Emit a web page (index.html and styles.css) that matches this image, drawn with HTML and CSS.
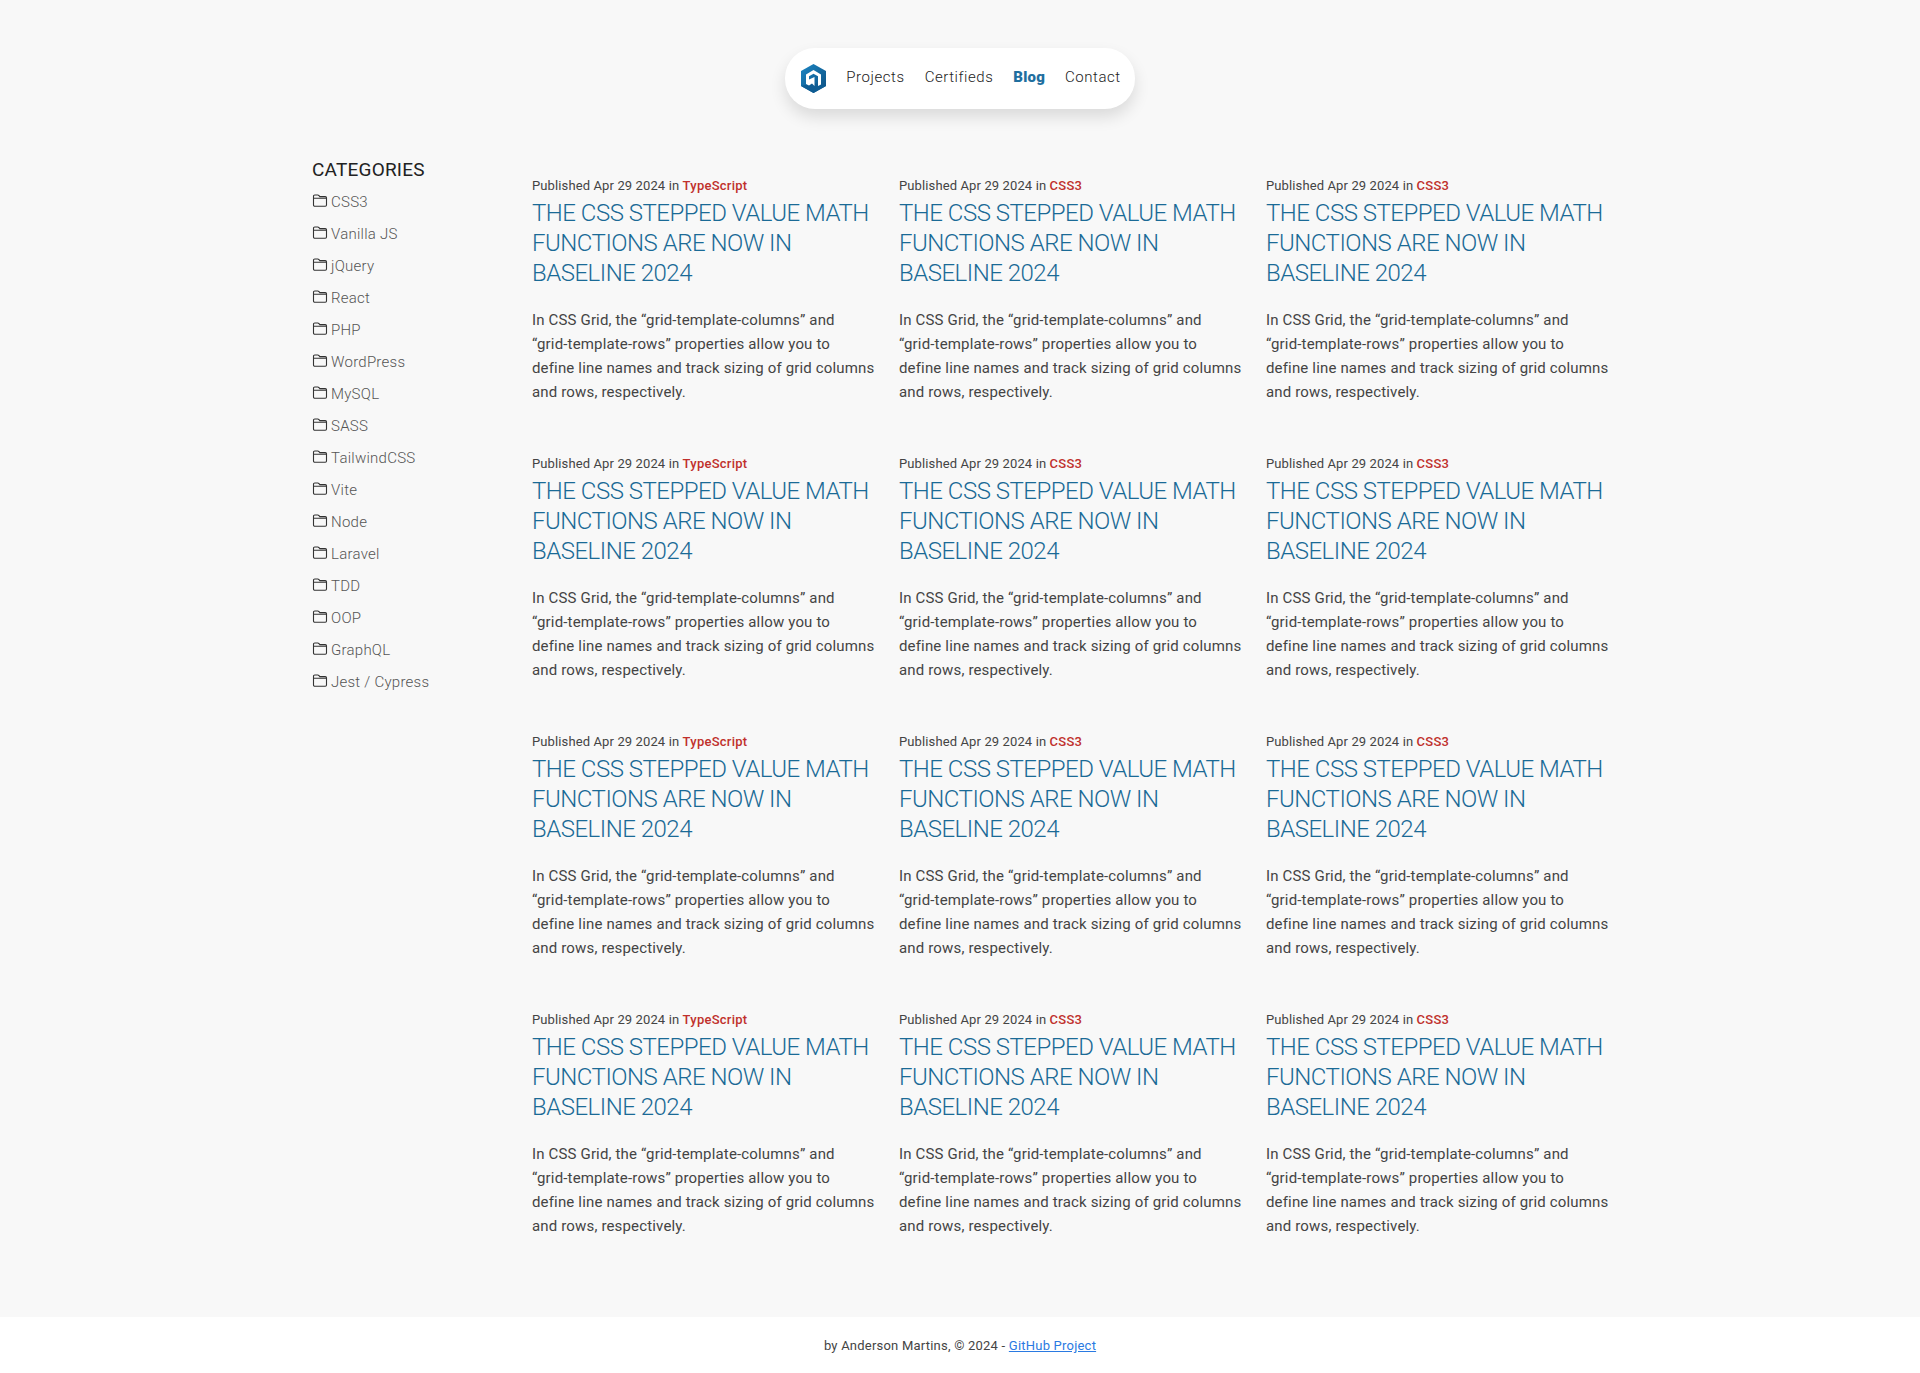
FILE: index.html
```html
<!DOCTYPE html>
<html lang="en">
<head>
    <meta charset="UTF-8">
    <title>Blog</title>
    <link rel="stylesheet" href="styles.css">
</head>
<body>
    <header class="top">
        <nav class="menu">
            <a class="logo" href="#">
                <svg width="25" height="29" viewBox="0 0 25 29">
                    <defs>
                        <linearGradient id="hex" x1="0" y1="0" x2="1" y2="1">
                            <stop offset="0" stop-color="#1b86c4"/>
                            <stop offset="1" stop-color="#0d4f80"/>
                        </linearGradient>
                    </defs>
                    <polygon points="12.500,0 25,7 25,22 12.500,29 0,22 0,7" fill="url(#hex)"/>
                    <polygon points="12.500,19 25,22 12.500,29 0,22" fill="#0e5c93"/>
                    <path d="M5 20V10.500L12.500 6 20 10.500V20.500L17 22V12.300L12.500 9.700 8 12.300V15.500L13.500 13V22L11 19.500 8 21.500z" fill="#fff"/>
                </svg>
            </a>
            <a href="#">Projects</a>
            <a href="#">Certifieds</a>
            <a class="active" href="#">Blog</a>
            <a href="#">Contact</a>
        </nav>
    </header>

    <main class="wrap">
        <aside class="side">
            <h2>CATEGORIES</h2>
            <ul>
                <li><svg class="folder" viewBox="0 0 16 13"><path d="M1.500 11V2.200C1.500 1.500 2 1 2.700 1h3.100c.4 0 .7.2 1 .5l1 1.100h5.500c.7 0 1.200.5 1.200 1.200V11c0 .7-.5 1.200-1.200 1.200H2.700C2 12.200 1.500 11.700 1.500 11zM1.500 4.200h13"/></svg><a href="#">CSS3</a></li>
                <li><svg class="folder" viewBox="0 0 16 13"><path d="M1.500 11V2.200C1.500 1.500 2 1 2.700 1h3.100c.4 0 .7.2 1 .5l1 1.100h5.500c.7 0 1.200.5 1.200 1.200V11c0 .7-.5 1.200-1.200 1.200H2.700C2 12.200 1.500 11.700 1.500 11zM1.500 4.200h13"/></svg><a href="#">Vanilla JS</a></li>
                <li><svg class="folder" viewBox="0 0 16 13"><path d="M1.500 11V2.200C1.500 1.500 2 1 2.700 1h3.100c.4 0 .7.2 1 .5l1 1.100h5.500c.7 0 1.200.5 1.200 1.200V11c0 .7-.5 1.200-1.200 1.200H2.700C2 12.200 1.500 11.700 1.500 11zM1.500 4.200h13"/></svg><a href="#">jQuery</a></li>
                <li><svg class="folder" viewBox="0 0 16 13"><path d="M1.500 11V2.200C1.500 1.500 2 1 2.700 1h3.100c.4 0 .7.2 1 .5l1 1.100h5.500c.7 0 1.200.5 1.200 1.200V11c0 .7-.5 1.200-1.200 1.200H2.700C2 12.200 1.500 11.700 1.500 11zM1.500 4.200h13"/></svg><a href="#">React</a></li>
                <li><svg class="folder" viewBox="0 0 16 13"><path d="M1.500 11V2.200C1.500 1.500 2 1 2.700 1h3.100c.4 0 .7.2 1 .5l1 1.100h5.500c.7 0 1.200.5 1.200 1.200V11c0 .7-.5 1.200-1.200 1.200H2.700C2 12.200 1.500 11.700 1.500 11zM1.500 4.200h13"/></svg><a href="#">PHP</a></li>
                <li><svg class="folder" viewBox="0 0 16 13"><path d="M1.500 11V2.200C1.500 1.500 2 1 2.700 1h3.100c.4 0 .7.2 1 .5l1 1.100h5.500c.7 0 1.200.5 1.200 1.200V11c0 .7-.5 1.200-1.200 1.200H2.700C2 12.200 1.500 11.700 1.500 11zM1.500 4.200h13"/></svg><a href="#">WordPress</a></li>
                <li><svg class="folder" viewBox="0 0 16 13"><path d="M1.500 11V2.200C1.500 1.500 2 1 2.700 1h3.100c.4 0 .7.2 1 .5l1 1.100h5.500c.7 0 1.200.5 1.200 1.200V11c0 .7-.5 1.200-1.200 1.200H2.700C2 12.200 1.500 11.700 1.500 11zM1.500 4.200h13"/></svg><a href="#">MySQL</a></li>
                <li><svg class="folder" viewBox="0 0 16 13"><path d="M1.500 11V2.200C1.500 1.500 2 1 2.700 1h3.100c.4 0 .7.2 1 .5l1 1.100h5.500c.7 0 1.200.5 1.200 1.200V11c0 .7-.5 1.200-1.200 1.200H2.700C2 12.200 1.500 11.700 1.500 11zM1.500 4.200h13"/></svg><a href="#">SASS</a></li>
                <li><svg class="folder" viewBox="0 0 16 13"><path d="M1.500 11V2.200C1.500 1.500 2 1 2.700 1h3.100c.4 0 .7.2 1 .5l1 1.100h5.500c.7 0 1.200.5 1.200 1.200V11c0 .7-.5 1.200-1.200 1.200H2.700C2 12.200 1.500 11.700 1.500 11zM1.500 4.200h13"/></svg><a href="#">TailwindCSS</a></li>
                <li><svg class="folder" viewBox="0 0 16 13"><path d="M1.500 11V2.200C1.500 1.500 2 1 2.700 1h3.100c.4 0 .7.2 1 .5l1 1.100h5.500c.7 0 1.200.5 1.200 1.200V11c0 .7-.5 1.200-1.200 1.200H2.700C2 12.200 1.500 11.700 1.500 11zM1.500 4.200h13"/></svg><a href="#">Vite</a></li>
                <li><svg class="folder" viewBox="0 0 16 13"><path d="M1.500 11V2.200C1.500 1.500 2 1 2.700 1h3.100c.4 0 .7.2 1 .5l1 1.100h5.500c.7 0 1.200.5 1.200 1.200V11c0 .7-.5 1.200-1.200 1.200H2.700C2 12.200 1.500 11.700 1.500 11zM1.500 4.200h13"/></svg><a href="#">Node</a></li>
                <li><svg class="folder" viewBox="0 0 16 13"><path d="M1.500 11V2.200C1.500 1.500 2 1 2.700 1h3.100c.4 0 .7.2 1 .5l1 1.100h5.500c.7 0 1.200.5 1.200 1.200V11c0 .7-.5 1.200-1.200 1.200H2.700C2 12.200 1.500 11.700 1.500 11zM1.500 4.200h13"/></svg><a href="#">Laravel</a></li>
                <li><svg class="folder" viewBox="0 0 16 13"><path d="M1.500 11V2.200C1.500 1.500 2 1 2.700 1h3.100c.4 0 .7.2 1 .5l1 1.100h5.500c.7 0 1.200.5 1.200 1.200V11c0 .7-.5 1.200-1.200 1.200H2.700C2 12.200 1.500 11.700 1.500 11zM1.500 4.200h13"/></svg><a href="#">TDD</a></li>
                <li><svg class="folder" viewBox="0 0 16 13"><path d="M1.500 11V2.200C1.500 1.500 2 1 2.700 1h3.100c.4 0 .7.2 1 .5l1 1.100h5.500c.7 0 1.200.5 1.200 1.200V11c0 .7-.5 1.200-1.200 1.200H2.700C2 12.200 1.500 11.700 1.500 11zM1.500 4.200h13"/></svg><a href="#">OOP</a></li>
                <li><svg class="folder" viewBox="0 0 16 13"><path d="M1.500 11V2.200C1.500 1.500 2 1 2.700 1h3.100c.4 0 .7.2 1 .5l1 1.100h5.500c.7 0 1.200.5 1.200 1.200V11c0 .7-.5 1.200-1.200 1.200H2.700C2 12.200 1.500 11.700 1.500 11zM1.500 4.200h13"/></svg><a href="#">GraphQL</a></li>
                <li><svg class="folder" viewBox="0 0 16 13"><path d="M1.500 11V2.200C1.500 1.500 2 1 2.700 1h3.100c.4 0 .7.2 1 .5l1 1.100h5.500c.7 0 1.200.5 1.200 1.200V11c0 .7-.5 1.200-1.200 1.200H2.700C2 12.200 1.500 11.700 1.500 11zM1.500 4.200h13"/></svg><a href="#">Jest / Cypress</a></li>
            </ul>
        </aside>

        <section class="posts">
            <article class="post">
                <p class="meta">Published Apr 29 2024 in <a href="#">TypeScript</a></p>
                <h3><a href="#">THE CSS STEPPED VALUE MATH FUNCTIONS ARE NOW IN BASELINE 2024</a></h3>
                <p class="text">In CSS Grid, the “grid-template-columns” and<br>“grid-template-rows” properties allow you to<br>define line names and track sizing of grid columns<br>and rows, respectively.</p>
            </article>
            <article class="post">
                <p class="meta">Published Apr 29 2024 in <a href="#">CSS3</a></p>
                <h3><a href="#">THE CSS STEPPED VALUE MATH FUNCTIONS ARE NOW IN BASELINE 2024</a></h3>
                <p class="text">In CSS Grid, the “grid-template-columns” and<br>“grid-template-rows” properties allow you to<br>define line names and track sizing of grid columns<br>and rows, respectively.</p>
            </article>
            <article class="post">
                <p class="meta">Published Apr 29 2024 in <a href="#">CSS3</a></p>
                <h3><a href="#">THE CSS STEPPED VALUE MATH FUNCTIONS ARE NOW IN BASELINE 2024</a></h3>
                <p class="text">In CSS Grid, the “grid-template-columns” and<br>“grid-template-rows” properties allow you to<br>define line names and track sizing of grid columns<br>and rows, respectively.</p>
            </article>
            <article class="post">
                <p class="meta">Published Apr 29 2024 in <a href="#">TypeScript</a></p>
                <h3><a href="#">THE CSS STEPPED VALUE MATH FUNCTIONS ARE NOW IN BASELINE 2024</a></h3>
                <p class="text">In CSS Grid, the “grid-template-columns” and<br>“grid-template-rows” properties allow you to<br>define line names and track sizing of grid columns<br>and rows, respectively.</p>
            </article>
            <article class="post">
                <p class="meta">Published Apr 29 2024 in <a href="#">CSS3</a></p>
                <h3><a href="#">THE CSS STEPPED VALUE MATH FUNCTIONS ARE NOW IN BASELINE 2024</a></h3>
                <p class="text">In CSS Grid, the “grid-template-columns” and<br>“grid-template-rows” properties allow you to<br>define line names and track sizing of grid columns<br>and rows, respectively.</p>
            </article>
            <article class="post">
                <p class="meta">Published Apr 29 2024 in <a href="#">CSS3</a></p>
                <h3><a href="#">THE CSS STEPPED VALUE MATH FUNCTIONS ARE NOW IN BASELINE 2024</a></h3>
                <p class="text">In CSS Grid, the “grid-template-columns” and<br>“grid-template-rows” properties allow you to<br>define line names and track sizing of grid columns<br>and rows, respectively.</p>
            </article>
            <article class="post">
                <p class="meta">Published Apr 29 2024 in <a href="#">TypeScript</a></p>
                <h3><a href="#">THE CSS STEPPED VALUE MATH FUNCTIONS ARE NOW IN BASELINE 2024</a></h3>
                <p class="text">In CSS Grid, the “grid-template-columns” and<br>“grid-template-rows” properties allow you to<br>define line names and track sizing of grid columns<br>and rows, respectively.</p>
            </article>
            <article class="post">
                <p class="meta">Published Apr 29 2024 in <a href="#">CSS3</a></p>
                <h3><a href="#">THE CSS STEPPED VALUE MATH FUNCTIONS ARE NOW IN BASELINE 2024</a></h3>
                <p class="text">In CSS Grid, the “grid-template-columns” and<br>“grid-template-rows” properties allow you to<br>define line names and track sizing of grid columns<br>and rows, respectively.</p>
            </article>
            <article class="post">
                <p class="meta">Published Apr 29 2024 in <a href="#">CSS3</a></p>
                <h3><a href="#">THE CSS STEPPED VALUE MATH FUNCTIONS ARE NOW IN BASELINE 2024</a></h3>
                <p class="text">In CSS Grid, the “grid-template-columns” and<br>“grid-template-rows” properties allow you to<br>define line names and track sizing of grid columns<br>and rows, respectively.</p>
            </article>
            <article class="post">
                <p class="meta">Published Apr 29 2024 in <a href="#">TypeScript</a></p>
                <h3><a href="#">THE CSS STEPPED VALUE MATH FUNCTIONS ARE NOW IN BASELINE 2024</a></h3>
                <p class="text">In CSS Grid, the “grid-template-columns” and<br>“grid-template-rows” properties allow you to<br>define line names and track sizing of grid columns<br>and rows, respectively.</p>
            </article>
            <article class="post">
                <p class="meta">Published Apr 29 2024 in <a href="#">CSS3</a></p>
                <h3><a href="#">THE CSS STEPPED VALUE MATH FUNCTIONS ARE NOW IN BASELINE 2024</a></h3>
                <p class="text">In CSS Grid, the “grid-template-columns” and<br>“grid-template-rows” properties allow you to<br>define line names and track sizing of grid columns<br>and rows, respectively.</p>
            </article>
            <article class="post">
                <p class="meta">Published Apr 29 2024 in <a href="#">CSS3</a></p>
                <h3><a href="#">THE CSS STEPPED VALUE MATH FUNCTIONS ARE NOW IN BASELINE 2024</a></h3>
                <p class="text">In CSS Grid, the “grid-template-columns” and<br>“grid-template-rows” properties allow you to<br>define line names and track sizing of grid columns<br>and rows, respectively.</p>
            </article>
        </section>
    </main>

    <footer class="foot">
        by Anderson Martins, © 2024 - <a href="#">GitHub Project</a>
    </footer>
</body>
</html>
```

FILE: styles.css
```css
*{
    box-sizing: border-box;
}
body{
    margin: 0;
    background: #f8f8f8;
    color: #333;
    font-family: Roboto, "Liberation Sans", sans-serif;
}
a{
    text-decoration: none;
    color: inherit;
}

.top{
    display: flex;
    justify-content: center;
    padding-top: 48px;
}
.menu{
    display: flex;
    align-items: center;
    gap: 20px;
    height: 61px;
    padding: 0 14px 0 16px;
    background: #fff;
    border-radius: 30px;
    box-shadow: 0 8px 16px rgba(0,0,0,.12);
    font-size: 15px;
    font-weight: 300;
    letter-spacing: .55px;
    color: #222;
}
.menu a{
    margin-bottom: 3px;
}
.menu .logo{
    display: flex;
    margin-bottom: 0;
}
.menu .active{
    color: #1f6f9f;
    font-weight: 900;
    letter-spacing: .2px;
}

.wrap{
    display: flex;
    width: 1300px;
    margin: 48px auto 0;
    padding-left: 2px;
}
.side{
    width: 220px;
    flex-shrink: 0;
}
.side h2{
    margin: 1px 0 4px;
    font-size: 19px;
    font-weight: 400;
    line-height: 24px;
    letter-spacing: .2px;
    color: #222;
}
.side ul{
    margin: 0;
    padding: 0;
    list-style: none;
}
.side li{
    display: flex;
    align-items: center;
    gap: 3px;
    height: 32px;
    font-size: 15px;
    font-weight: 300;
    letter-spacing: .25px;
    color: #555;
}
.folder{
    width: 16px;
    height: 13px;
    margin-top: -3px;
    fill: none;
    stroke: #333;
    stroke-width: 1.100;
}

.posts{
    display: grid;
    grid-template-columns: repeat(3, 347px);
    column-gap: 20px;
    padding-top: 21px;
}
.post{
    height: 278px;
}
.meta{
    margin: 0;
    font-size: 13px;
    line-height: 16px;
    letter-spacing: .12px;
    color: #444;
}
.meta a{
    color: #c0302c;
    font-weight: 500;
    letter-spacing: .25px;
}
.post h3{
    margin: 4px 0 0;
    font-size: 24px;
    font-weight: 300;
    line-height: 30px;
    letter-spacing: -.5px;
    color: #1a6a96;
}
.text{
    margin: 20px 0 0;
    font-size: 15px;
    line-height: 24px;
    letter-spacing: .16px;
    white-space: nowrap;
    color: #444;
}

.foot{
    margin-top: 27px;
    height: 56px;
    background: #fff;
    padding-top: 21px;
    text-align: center;
    font-size: 13px;
    line-height: 16px;
    letter-spacing: .22px;
    color: #444;
}
.foot a{
    color: #2a7ae2;
    text-decoration: underline;
}
```
